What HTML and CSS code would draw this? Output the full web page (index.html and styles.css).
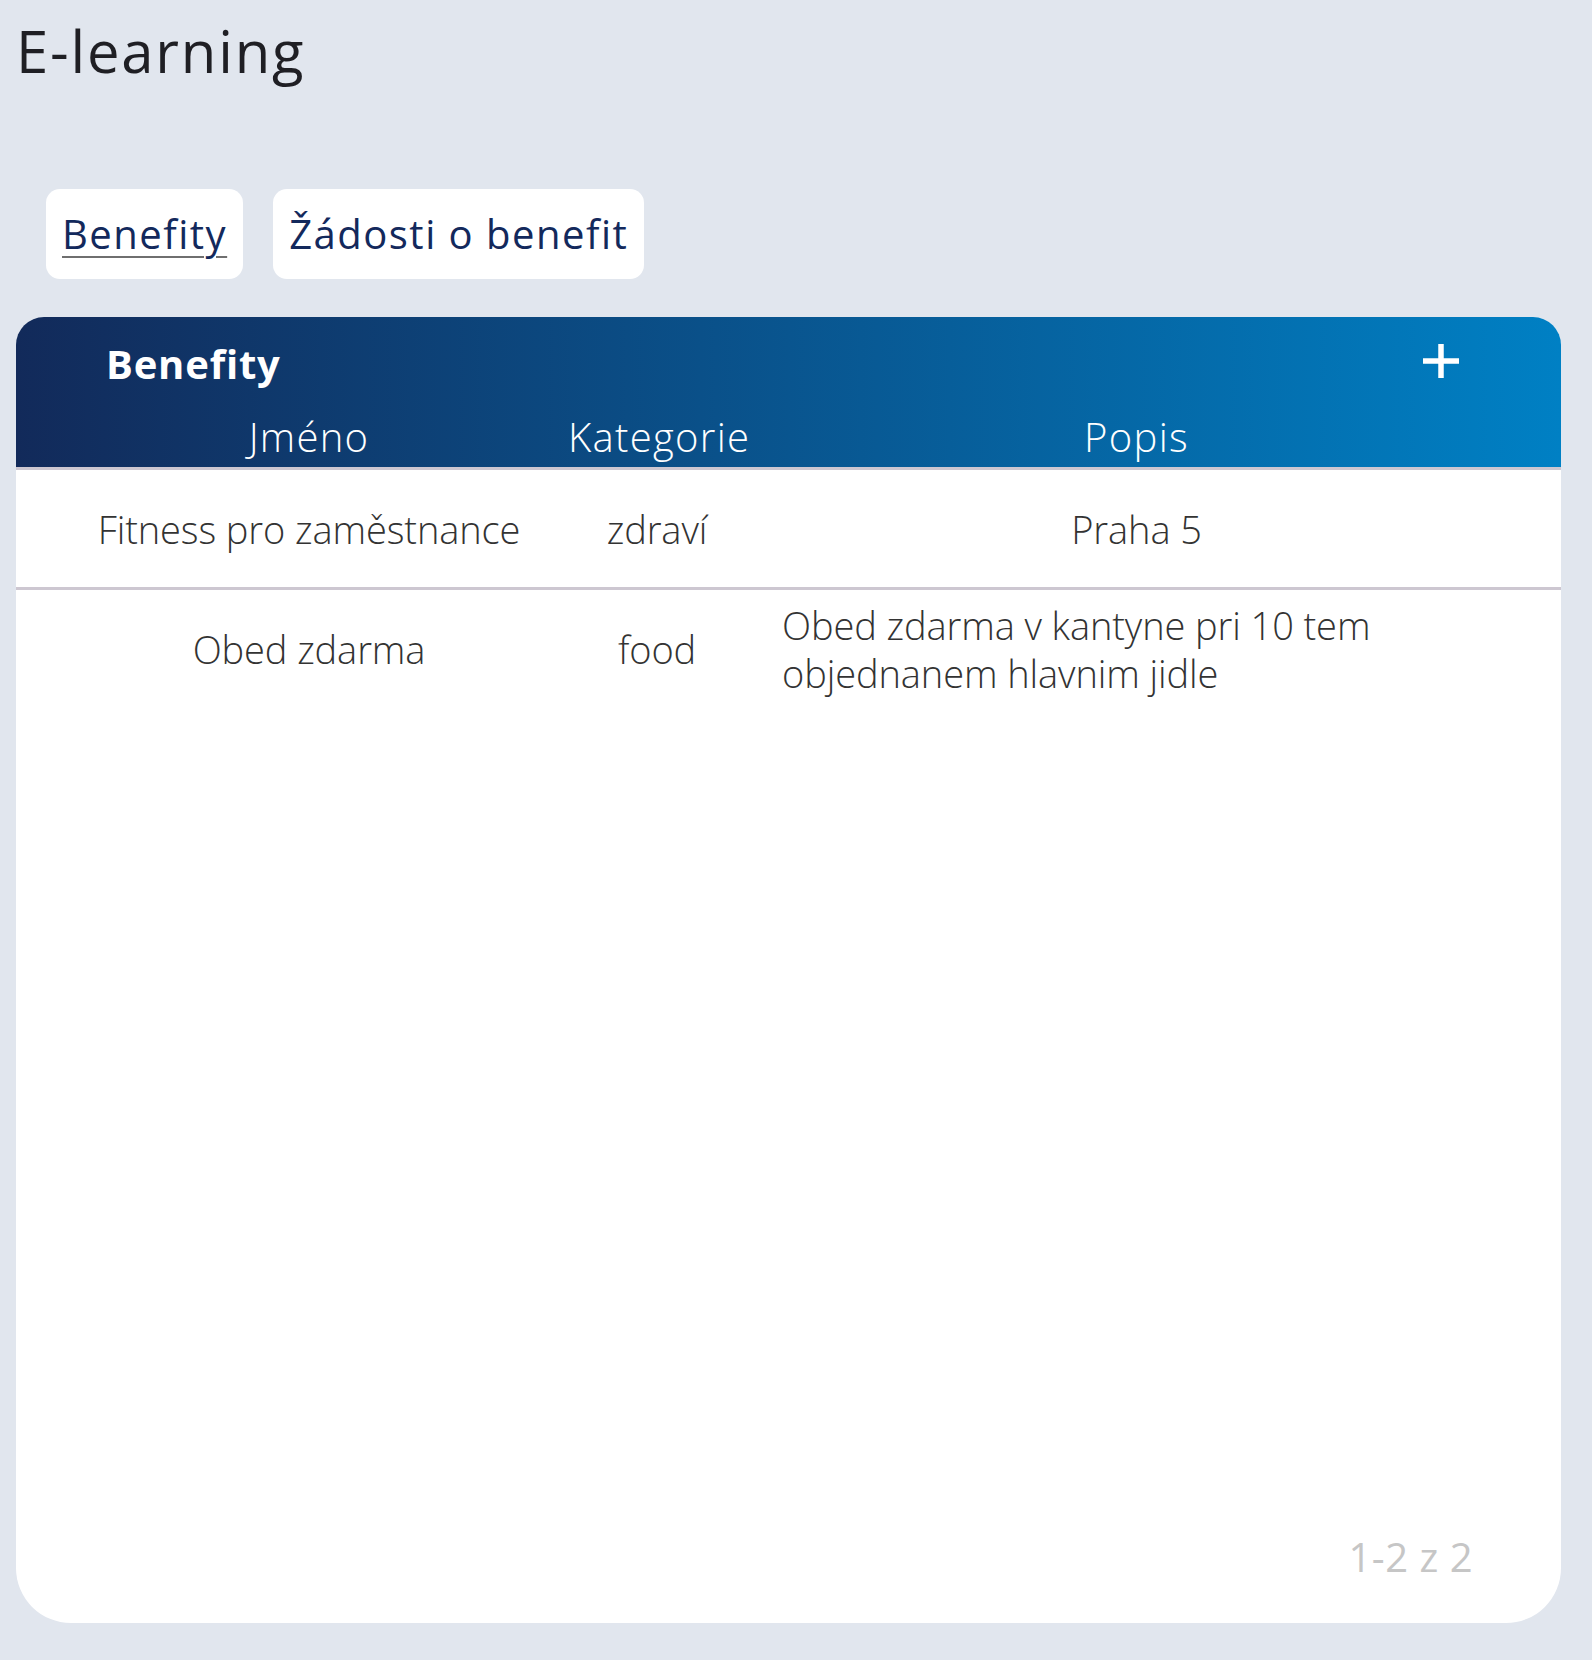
FILE: index.html
```html
<!DOCTYPE html>
<html lang="cs">
<head>
<meta charset="utf-8">
<title>E-learning</title>
<link rel="stylesheet" href="styles.css">
</head>
<body>
<div class="page">
  <h1 class="page-title">E-learning</h1>
  <nav class="tabs">
    <a class="tab tab--active" href="#">Benefity</a>
    <a class="tab" href="#">Žádosti o benefit</a>
  </nav>
  <section class="card">
    <header class="card-head">
      <div class="card-head__top">
        <h2 class="card-title">Benefity</h2>
        <button class="add-btn" type="button" aria-label="Přidat">
          <svg width="36" height="36" viewBox="0 0 36 36"><path d="M18 1V35M0 18H36" stroke="#fff" stroke-width="5.5" fill="none"/></svg>
        </button>
      </div>
      <div class="grid-row head-row">
        <div class="head-cell">Jméno</div>
        <div class="head-cell">Kategorie</div>
        <div class="head-cell">Popis</div>
      </div>
    </header>
    <div class="card-body">
      <div class="grid-row body-row">
        <div class="cell">Fitness pro zaměstnance</div>
        <div class="cell">zdraví</div>
        <div class="cell">Praha 5</div>
      </div>
      <div class="grid-row body-row">
        <div class="cell">Obed zdarma</div>
        <div class="cell">food</div>
        <div class="cell cell--left">Obed zdarma v kantyne pri 10 tem objednanem hlavnim jidle</div>
      </div>
    </div>
    <footer class="pager">1-2 z 2</footer>
  </section>
</div>
</body>
</html>
```
FILE: styles.css
```css
html, body {
  margin: 0;
  background: #e1e6ee;
  font-family: "Open Sans", "Noto Sans", sans-serif;
}

.page {
  padding: 11px 31px 37px 16px;
}

.page-title {
  margin: 0;
  font-size: 58px;
  font-weight: 400;
  line-height: 79px;
  letter-spacing: 1.8px;
  color: #1f1f24;
}

.tabs {
  display: flex;
  gap: 30px;
  margin: 99px 0 38px 30px;
}

.tab {
  background: #fff;
  border-radius: 14px;
  padding: 18px 16px;
  font-size: 40px;
  line-height: 54px;
  letter-spacing: 1.5px;
  color: #13295c;
  text-decoration: none;
}

.tab--active {
  text-decoration: underline;
  text-decoration-color: #6f6f6f;
  text-decoration-thickness: 2px;
  text-underline-offset: 7px;
}

.card {
  height: 1306px;
  background: #fff;
  border-radius: 28px 28px 55px 55px;
  overflow: hidden;
  display: flex;
  flex-direction: column;
}

.card-head {
  background: linear-gradient(90deg, #122a5a 0%, #0080c4 100%);
  padding: 20px 0 3px;
  border-bottom: 3px solid #cdc7d1;
}

.card-head__top {
  display: flex;
  justify-content: space-between;
  align-items: center;
  height: 54px;
  padding: 0 102px 0 90px;
  margin-bottom: 18px;
}

.card-title {
  margin: 0;
  font-size: 40px;
  font-weight: 700;
  line-height: 54px;
  letter-spacing: 0.8px;
  color: #fff;
}

.add-btn {
  width: 36px;
  height: 36px;
  padding: 0;
  border: 0;
  background: none;
  cursor: pointer;
  margin-top: -6px;
}

.add-btn svg {
  display: block;
}

.grid-row {
  display: grid;
  grid-template-columns: 486px 210px 1fr;
  padding: 0 50px;
}

.head-cell {
  text-align: center;
  font-size: 40px;
  font-weight: 300;
  line-height: 55px;
  letter-spacing: 1.3px;
  color: #fff;
  padding: 0 20px;
  white-space: nowrap;
}

.head-cell:nth-child(2) {
  padding: 0 24px 0 16px;
}

.card-body {
  flex: 1;
}

.body-row {
  align-items: center;
  min-height: 97px;
  padding-top: 10px;
  padding-bottom: 10px;
  border-bottom: 3px solid #cdc7d1;
}

.body-row:last-child {
  border-bottom: 0;
}

.cell {
  text-align: center;
  font-size: 38px;
  font-weight: 300;
  line-height: 48px;
  letter-spacing: -0.1px;
  color: #333;
  padding: 0 20px;
}

.cell--left {
  text-align: left;
}

.pager {
  text-align: right;
  padding: 0 88px 39px 0;
  font-size: 40px;
  line-height: 54px;
  letter-spacing: 0.5px;
  color: #c6c6c6;
}
```
